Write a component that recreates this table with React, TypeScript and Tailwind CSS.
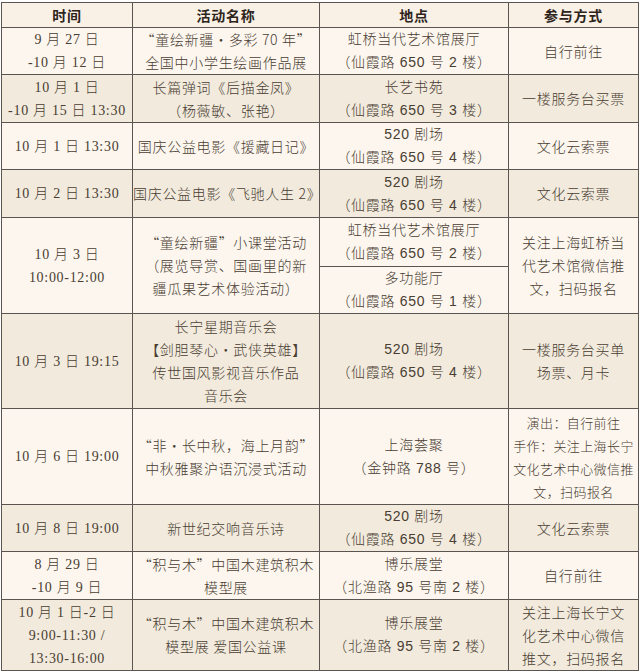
import React from "react";

const cjk = '"Noto Sans CJK SC", sans-serif';
const timeFont = '"Liberation Serif", "Noto Sans CJK SC", serif';
const locFont = '"Liberation Sans", "Noto Sans CJK SC", sans-serif';

type Row = {
  time: string[];
  name: string[];
  loc: string[][];
  locH?: string[];
  part: string[];
  partSmall?: boolean;
  bg: "a" | "b";
  h: string;
};

const rows: Row[] = [
  { h: "h-[47px]", time: ["9 月 27 日", "-10 月 12 日"], name: ["“童绘新疆·多彩 70 年”", "全国中小学生绘画作品展"], loc: [["虹桥当代艺术馆展厅", "（仙霞路 650 号 2 楼）"]], part: ["自行前往"], bg: "a" },
  { h: "h-[48px]", time: ["10 月 1 日", "-10 月 15 日 13:30"], name: ["长篇弹词《后描金凤》", "（杨薇敏、张艳）"], loc: [["长艺书苑", "（仙霞路 650 号 3 楼）"]], part: ["一楼服务台买票"], bg: "b" },
  { h: "h-[47px]", time: ["10 月 1 日 13:30"], name: ["国庆公益电影《援藏日记》"], loc: [["520 剧场", "（仙霞路 650 号 4 楼）"]], part: ["文化云索票"], bg: "a" },
  { h: "h-[48px]", time: ["10 月 2 日 13:30"], name: ["国庆公益电影《飞驰人生 2》"], loc: [["520 剧场", "（仙霞路 650 号 4 楼）"]], part: ["文化云索票"], bg: "b" },
  {
    h: "h-[49px]",
    time: ["10 月 3 日", "10:00-12:00"],
    name: ["“童绘新疆”小课堂活动", "（展览导赏、国画里的新", "疆瓜果艺术体验活动）"],
    loc: [["虹桥当代艺术馆展厅", "（仙霞路 650 号 2 楼）"], ["多功能厅", "（仙霞路 650 号 1 楼）"]],
    locH: ["h-[47px]"],
    part: ["关注上海虹桥当", "代艺术馆微信推", "文，扫码报名"],
    bg: "a",
  },
  { h: "h-[95px]", time: ["10 月 3 日 19:15"], name: ["长宁星期音乐会", "【剑胆琴心·武侠英雄】", "传世国风影视音乐作品", "音乐会"], loc: [["520 剧场", "（仙霞路 650 号 4 楼）"]], part: ["一楼服务台买单", "场票、月卡"], bg: "b" },
  { h: "h-[96px]", time: ["10 月 6 日 19:00"], name: ["“非·长中秋，海上月韵”", "中秋雅聚沪语沉浸式活动"], loc: [["上海荟聚", "（金钟路 788 号）"]], part: ["演出：自行前往", "手作：关注上海长宁", "文化艺术中心微信推", "文，扫码报名"], partSmall: true, bg: "a" },
  { h: "h-[46px]", time: ["10 月 8 日 19:00"], name: ["新世纪交响音乐诗"], loc: [["520 剧场", "（仙霞路 650 号 4 楼）"]], part: ["文化云索票"], bg: "b" },
  { h: "h-[48px]", time: ["8 月 29 日", "-10 月 9 日"], name: ["“积与木”中国木建筑积木", "模型展"], loc: [["博乐展堂", "（北渔路 95 号南 2 楼）"]], part: ["自行前往"], bg: "a" },
  { h: "h-[71px]", time: ["10 月 1 日-2 日", "9:00-11:30 /", "13:30-16:00"], name: ["“积与木”中国木建筑积木", "模型展 爱国公益课"], loc: [["博乐展堂", "（北渔路 95 号南 2 楼）"]], part: ["关注上海长宁文", "化艺术中心微信", "推文，扫码报名"], bg: "b" },
];

function Lines({ lines }: { lines: string[] }) {
  return (
    <>
      {lines.map((l, i) => (
        <div key={i} className="whitespace-nowrap">
          {l}
        </div>
      ))}
    </>
  );
}

const cell = "border border-[#5a5550] text-center align-middle p-0 leading-[23px]";

export default function App() {
  return (
    <div className="w-[640px] h-[672px] bg-white pl-[1px] pt-[2px]">
      <table
        className="table-fixed border-collapse w-[637px] text-[14px] tracking-[0.7px] text-[#4a3d32] font-light"
        style={{ fontFamily: cjk }}
      >
        <colgroup>
          <col className="w-[131px]" />
          <col className="w-[187px]" />
          <col className="w-[189px]" />
          <col className="w-[130px]" />
        </colgroup>
        <thead>
          <tr className="bg-[#f9f1e6] h-[25px]">
            {["时间", "活动名称", "地点", "参与方式"].map((h) => (
              <th key={h} className={`${cell} font-bold text-[#2e241b]`}>
                {h}
              </th>
            ))}
          </tr>
        </thead>
        <tbody>
          {rows.map((r, i) => {
            const bg = r.bg === "a" ? "bg-[#fcf6ee]" : "bg-[#f1eadd]";
            const span = r.loc.length;
            return (
              <React.Fragment key={i}>
                <tr className={`${bg} ${r.h}`}>
                  <td rowSpan={span} className={cell} style={{ fontFamily: timeFont }}>
                    <Lines lines={r.time} />
                  </td>
                  <td rowSpan={span} className={cell}>
                    <Lines lines={r.name} />
                  </td>
                  <td className={cell} style={{ fontFamily: locFont }}>
                    <Lines lines={r.loc[0]} />
                  </td>
                  <td
                    rowSpan={span}
                    className={`${cell} ${r.partSmall ? "text-[13px] tracking-[0.4px]" : ""}`}
                  >
                    <Lines lines={r.part} />
                  </td>
                </tr>
                {r.loc.slice(1).map((l, j) => (
                  <tr key={j} className={`${bg} ${r.locH ? r.locH[j] : ""}`}>
                    <td className={cell} style={{ fontFamily: locFont }}>
                      <Lines lines={l} />
                    </td>
                  </tr>
                ))}
              </React.Fragment>
            );
          })}
        </tbody>
      </table>
    </div>
  );
}
